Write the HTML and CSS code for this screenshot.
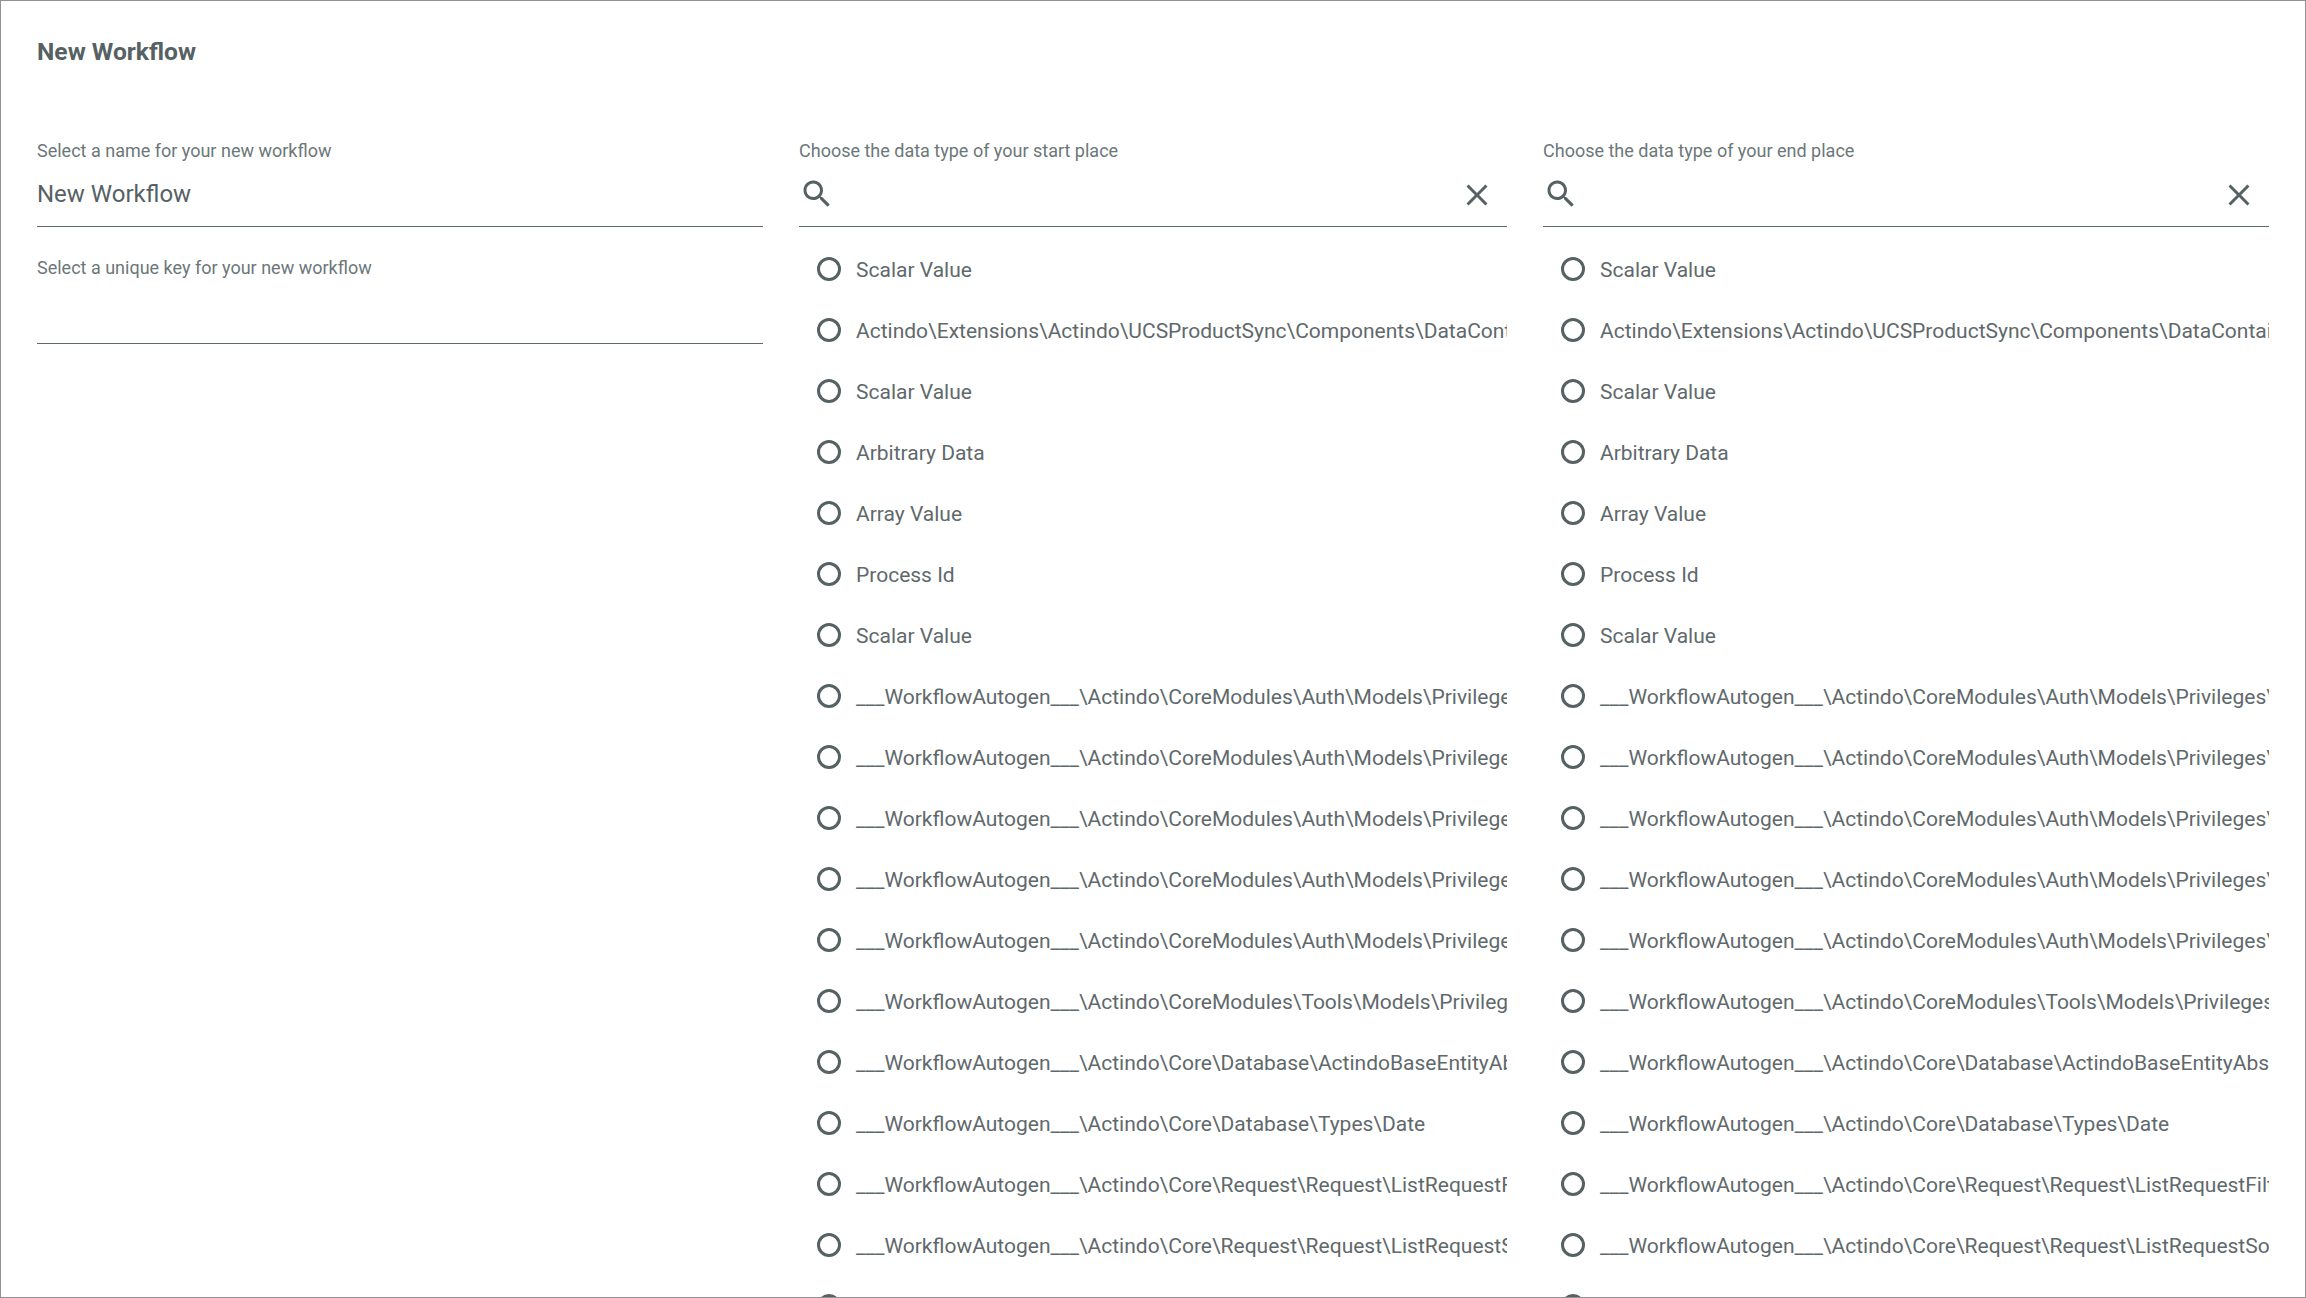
FILE: index.html
```html
<!DOCTYPE html>
<html lang="en">
<head>
<meta charset="utf-8">
<title>New Workflow</title>
<link rel="stylesheet" href="styles.css">
</head>
<body>
<svg class="sprite" width="0" height="0" aria-hidden="true">
  <symbol id="search" viewBox="0 0 24 24"><path d="M15.5 14h-.79l-.28-.27C15.41 12.59 16 11.11 16 9.5 16 5.91 13.09 3 9.5 3S3 5.91 3 9.5 5.91 16 9.5 16c1.61 0 3.09-.59 4.23-1.57l.27.28v.79l5 4.99L20.49 19l-4.99-5zm-6 0C7.01 14 5 11.99 5 9.5S7.01 5 9.5 5 14 7.01 14 9.5 11.99 14 9.5 14z"/></symbol>
  <symbol id="close" viewBox="0 0 24 24"><path d="M19 6.41L17.59 5 12 10.59 6.41 5 5 6.41 10.59 12 5 17.59 6.41 19 12 13.41 17.59 19 19 17.59 13.41 12z"/></symbol>
</svg>
<main class="dialog">
  <h1 class="title">New Workflow</h1>
  <div class="columns">
    <section class="column">
      <div class="field">
        <div class="label">Select a name for your new workflow</div>
        <div class="control"><span class="value">New Workflow</span></div>
      </div>
      <div class="field">
        <div class="label">Select a unique key for your new workflow</div>
        <div class="control"></div>
      </div>
    </section>
    <section class="column">
      <div class="field">
        <div class="label">Choose the data type of your start place</div>
        <div class="control search"><svg class="icon"><use href="#search"/></svg><svg class="icon clear"><use href="#close"/></svg></div>
      </div>
      <ul class="options">
        <li class="option"><span class="radio"></span><span class="text">Scalar Value</span></li>
        <li class="option"><span class="radio"></span><span class="text">Actindo\Extensions\Actindo\UCSProductSync\Components\DataContainer</span></li>
        <li class="option"><span class="radio"></span><span class="text">Scalar Value</span></li>
        <li class="option"><span class="radio"></span><span class="text">Arbitrary Data</span></li>
        <li class="option"><span class="radio"></span><span class="text">Array Value</span></li>
        <li class="option"><span class="radio"></span><span class="text">Process Id</span></li>
        <li class="option"><span class="radio"></span><span class="text">Scalar Value</span></li>
        <li class="option"><span class="radio"></span><span class="text">___WorkflowAutogen___\Actindo\CoreModules\Auth\Models\Privileges\</span></li>
        <li class="option"><span class="radio"></span><span class="text">___WorkflowAutogen___\Actindo\CoreModules\Auth\Models\Privileges\</span></li>
        <li class="option"><span class="radio"></span><span class="text">___WorkflowAutogen___\Actindo\CoreModules\Auth\Models\Privileges\</span></li>
        <li class="option"><span class="radio"></span><span class="text">___WorkflowAutogen___\Actindo\CoreModules\Auth\Models\Privileges\</span></li>
        <li class="option"><span class="radio"></span><span class="text">___WorkflowAutogen___\Actindo\CoreModules\Auth\Models\Privileges\</span></li>
        <li class="option"><span class="radio"></span><span class="text">___WorkflowAutogen___\Actindo\CoreModules\Tools\Models\Privileges\</span></li>
        <li class="option"><span class="radio"></span><span class="text">___WorkflowAutogen___\Actindo\Core\Database\ActindoBaseEntityAbstract</span></li>
        <li class="option"><span class="radio"></span><span class="text">___WorkflowAutogen___\Actindo\Core\Database\Types\Date</span></li>
        <li class="option"><span class="radio"></span><span class="text">___WorkflowAutogen___\Actindo\Core\Request\Request\ListRequestFilter</span></li>
        <li class="option"><span class="radio"></span><span class="text">___WorkflowAutogen___\Actindo\Core\Request\Request\ListRequestSort</span></li>
        <li class="option"><span class="radio"></span></li>
      </ul>
    </section>
    <section class="column">
      <div class="field">
        <div class="label">Choose the data type of your end place</div>
        <div class="control search"><svg class="icon"><use href="#search"/></svg><svg class="icon clear"><use href="#close"/></svg></div>
      </div>
      <ul class="options">
        <li class="option"><span class="radio"></span><span class="text">Scalar Value</span></li>
        <li class="option"><span class="radio"></span><span class="text">Actindo\Extensions\Actindo\UCSProductSync\Components\DataContainer</span></li>
        <li class="option"><span class="radio"></span><span class="text">Scalar Value</span></li>
        <li class="option"><span class="radio"></span><span class="text">Arbitrary Data</span></li>
        <li class="option"><span class="radio"></span><span class="text">Array Value</span></li>
        <li class="option"><span class="radio"></span><span class="text">Process Id</span></li>
        <li class="option"><span class="radio"></span><span class="text">Scalar Value</span></li>
        <li class="option"><span class="radio"></span><span class="text">___WorkflowAutogen___\Actindo\CoreModules\Auth\Models\Privileges\</span></li>
        <li class="option"><span class="radio"></span><span class="text">___WorkflowAutogen___\Actindo\CoreModules\Auth\Models\Privileges\</span></li>
        <li class="option"><span class="radio"></span><span class="text">___WorkflowAutogen___\Actindo\CoreModules\Auth\Models\Privileges\</span></li>
        <li class="option"><span class="radio"></span><span class="text">___WorkflowAutogen___\Actindo\CoreModules\Auth\Models\Privileges\</span></li>
        <li class="option"><span class="radio"></span><span class="text">___WorkflowAutogen___\Actindo\CoreModules\Auth\Models\Privileges\</span></li>
        <li class="option"><span class="radio"></span><span class="text">___WorkflowAutogen___\Actindo\CoreModules\Tools\Models\Privileges\</span></li>
        <li class="option"><span class="radio"></span><span class="text">___WorkflowAutogen___\Actindo\Core\Database\ActindoBaseEntityAbstract</span></li>
        <li class="option"><span class="radio"></span><span class="text">___WorkflowAutogen___\Actindo\Core\Database\Types\Date</span></li>
        <li class="option"><span class="radio"></span><span class="text">___WorkflowAutogen___\Actindo\Core\Request\Request\ListRequestFilter</span></li>
        <li class="option"><span class="radio"></span><span class="text">___WorkflowAutogen___\Actindo\Core\Request\Request\ListRequestSort</span></li>
        <li class="option"><span class="radio"></span></li>
      </ul>
    </section>
  </div>
</main>
</body>
</html>
```
FILE: styles.css
```css
* { box-sizing: border-box; }
body {
  margin: 0;
  background: #fff;
  color: #566164;
  font-family: Roboto, "Liberation Sans", sans-serif;
}
.sprite { display: none; }
.dialog {
  height: 1298px;
  overflow: hidden;
  border: 1px solid #919191;
  padding: 37px 36px 0;
}
.title {
  margin: 0 0 74px;
  font-size: 24.6px;
  line-height: 28px;
  font-weight: 700;
}
.columns {
  display: grid;
  grid-template-columns: 726px 708px 726px;
  column-gap: 36px;
}
.column { min-width: 0; }
.field + .field { margin-top: 30px; }
.label {
  font-size: 18px;
  line-height: 22px;
  color: #6c7779;
}
.control {
  display: flex;
  align-items: flex-start;
  height: 65px;
  padding-top: 18px;
  border-bottom: 1px solid #5f6b6b;
}
.value { font-size: 24px; line-height: 28px; }
.search {
  justify-content: space-between;
  padding: 14px 12px 0 0;
}
.icon { width: 36px; height: 36px; fill: #566164; }
.clear { margin-top: 1px; }
.options {
  list-style: none;
  margin: 11px 0 0;
  padding: 0 0 0 18px;
  overflow: hidden;
}
.option {
  display: flex;
  gap: 15px;
  height: 61px;
  padding-top: 19px;
}
.radio {
  flex: none;
  width: 24px;
  height: 24px;
  border: 3px solid #566164;
  border-radius: 50%;
}
.text {
  margin-top: 1px;
  font-size: 21px;
  line-height: 24px;
  white-space: nowrap;
  color: #5f696c;
}
```
